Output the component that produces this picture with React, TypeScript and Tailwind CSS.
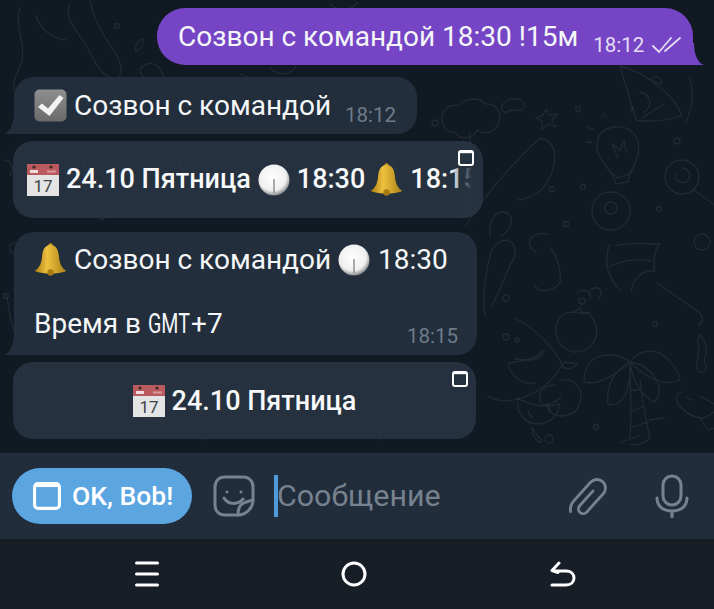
import React from 'react';

const CalendarEmoji = () => (
  <svg width="32" height="32" viewBox="0 0 32 32" className="shrink-0">
    <rect x="0" y="0" width="32" height="32" fill="#e4e4e4" />
    <rect x="0" y="0" width="32" height="11" fill="#b95a5e" />
    <circle cx="7" cy="3" r="1.6" fill="#3a2a2a" />
    <circle cx="24" cy="3" r="1.6" fill="#3a2a2a" />
    <rect x="3" y="6" width="8" height="3" fill="#efdcdc" />
    <rect x="20" y="6.5" width="9" height="2" fill="#d89a9c" />
    <text x="16" y="28" textAnchor="middle" fontSize="17" fontFamily="Roboto, sans-serif" fill="#3d4247">17</text>
  </svg>
);

const CheckEmoji = () => (
  <svg width="33" height="33" viewBox="0 0 33 33" className="shrink-0">
    <defs>
      <linearGradient id="chk" x1="0" y1="0" x2="0" y2="1">
        <stop offset="0" stopColor="#8f8f8f" />
        <stop offset="1" stopColor="#6a6a6a" />
      </linearGradient>
    </defs>
    <rect x="0.5" y="0.5" width="32" height="32" rx="5" fill="url(#chk)" />
    <path d="M4 18l4-3.500 6 5L25.500 6l4 3-14 18z" fill="#f3f3f3" />
  </svg>
);

const ClockEmoji = () => (
  <svg width="32" height="32" viewBox="0 0 32 32" className="shrink-0">
    <defs>
      <radialGradient id="clk" cx="0.45" cy="0.4" r="0.62">
        <stop offset="0" stopColor="#ffffff" />
        <stop offset="0.72" stopColor="#efefef" />
        <stop offset="1" stopColor="#7d7d7d" />
      </radialGradient>
    </defs>
    <circle cx="16" cy="16" r="15.500" fill="url(#clk)" />
    <rect x="15.300" y="15" width="1.400" height="14" fill="#8a8a8a" />
  </svg>
);

const BellEmoji = () => (
  <svg width="33" height="33" viewBox="0 0 33 33" className="shrink-0">
    <defs>
      <linearGradient id="bel" x1="0" y1="0" x2="1" y2="0">
        <stop offset="0" stopColor="#a87c10" />
        <stop offset="0.4" stopColor="#eec040" />
        <stop offset="1" stopColor="#a97e12" />
      </linearGradient>
    </defs>
    <circle cx="16.500" cy="2.500" r="2.200" fill="#c7991f" />
    <path d="M16.500 2C10 2 8.500 8 8 14c-.5 6-2.500 11-7.500 14 5 2 10.500 2.500 16 2.500S28 30 32.500 28c-5-3-7-8-7.500-14C24.500 8 23 2 16.500 2z" fill="url(#bel)" />
    <circle cx="16.500" cy="29.500" r="3.200" fill="#a87a10" />
  </svg>
);

// telegram web-app glyph, used on the inline buttons
const WebAppIcon = ({ size = 16, stroke = 2 }: { size?: number; stroke?: number }) => (
  <svg width={size} height={size} viewBox="0 0 16 16" fill="none" className="shrink-0">
    <rect x={stroke / 2} y={stroke / 2} width={16 - stroke} height={16 - stroke} rx="2" stroke="#fff" strokeWidth={stroke} />
    <rect x={stroke / 2} y={stroke / 2} width={16 - stroke} height={stroke * 1.1} fill="#fff" />
  </svg>
);

const Doodles = () => (
  <svg className="absolute inset-0" width="714" height="453" viewBox="0 0 714 453" fill="none" stroke="#ffffff" strokeOpacity="0.07" strokeWidth="1.300" strokeLinecap="round" strokeLinejoin="round">
    {/* top left */}
    <path d="M20 8c-6 18 6 36 2 52-3 12-10 18-8 30M36 16c4 12 14 22 30 24M70 4c-6 12 4 24 14 38 10 16 14 32 28 36 10 2 12-10 4-24-10-16-22-30-26-54" />
    <circle cx="117" cy="26" r="2.500" />
    <path d="M140 40c-6 6-6 16 0 8 4-4 4-12 0-8zM140 70c8-14 26-4 24 14-6 4-22-2-24-14z" />
    {/* top middle */}
    <path d="M270 68c8 8 20 8 26-2M330 4c8 8 20 8 28-2M240 74l10 4-6 8M90 150c-8 4-10 18 0 22M190 150c-8 0-14 10-8 18" />
    {/* pizza */}
    <path d="M620 66c30 8 56 32 62 50-14 4-32 6-46 4zM640 92c10 2 14 14 4 20M664 104l-22 14M690 78c4 18 2 30-4 44M651 80c4-6 12-2 10 4z" />
    {/* cloud, star */}
    <path d="M445 128c-8-10 0-26 14-22 6-10 22-8 26-2 14-2 18 14 12 22-4 8-14 8-20 4-4 10-18 10-22 2-4 0-8 0-10-4zM470 132v12M502 110c-2-8 10-14 18-10 8 4 4 12-4 10-6-2-10 6-14 0z" />
    <path d="M546 109l3 6 8-1-5 6 4 7-8-3-6 5 0-8-6-3 7-3z" />
    <circle cx="435" cy="123" r="3" />
    <circle cx="578" cy="109" r="2.500" />
    {/* lightbulb */}
    <path d="M610 172c-8-12-16-20-12-34 4-12 26-16 36-4 10 12 2 28-4 40l-12 4zM612 174l4 10 12-2 2-10M618 158l-6-14 8 6 4-10 2 12" />
    <path d="M594 130l-6-3M592 142h-6M606 118l-3-5M630 112l3-5" />
    <circle cx="677" cy="141" r="3" />
    {/* lollipop */}
    <circle cx="682" cy="177" r="17" />
    <path d="M682 168c8 0 10 10 4 14-6 2-12-2-10-8M694 190l22 16" />
    {/* rod */}
    <path d="M466 226c16-28 40-56 74-88 14 2 18 16 12 34-6 18-20 26-34 28M490 236c-2-14 6-26 14-24 12 2 8 20-4 24" />
    <circle cx="552" cy="189" r="2.500" />
    <circle cx="583" cy="187" r="2.500" />
    <circle cx="659" cy="209" r="2.500" />
    <circle cx="566" cy="224" r="2.500" />
    {/* 8 ball */}
    <circle cx="611" cy="211" r="19" />
    <circle cx="611" cy="208" r="6" />
    {/* umbrella */}
    <path d="M609 245c-4 16-4 30 12 46M609 267c14-8 30-8 42-6M659 243c-6 12-6 20-4 28-16-2-22 12-24 20M657 283l40 28c8 6 6 10 2 14M614 246c14-4 30-2 46-2" />
    <circle cx="702" cy="242" r="8" />
    {/* dino and dolphin */}
    <path d="M486 316c-6-14 2-56 6-66 6-10 18-14 22-4 4 10-2 14-6 24-6 14-10 24-16 36M514 318c20 8 44 34 48 48 6 6 14 0 16-2l-14-2c-16 30-54 48-76 34" />
    <circle cx="506" cy="298" r="3" />
    <circle cx="506" cy="337" r="3" />
    <circle cx="517" cy="340" r="2" />
    <path d="M515 359c12 2 28 2 28-8-10 10-26 10-34 12-2 8 10 22 26 20" />
    <path d="M534 285c6 8 16 8 26-2 2-16-6-30-10-36M536 252c-14-8-4-22 12-18M578 292c8-4 14 0 12 8M590 290c10-6 14 2 8 10" />
    <circle cx="582" cy="301" r="3" />
    {/* tomato */}
    <path d="M578 313c-14-4-24 6-22 20 2 14 14 22 26 18 14-4 18-20 12-30-4-8-10-10-16-8zM574 312l6-4 2 6 8-2" />
    <circle cx="655" cy="324" r="2.500" />
    <path d="M700 335c-6 6 2 12-2 16 2 8-4 12 0 20 8 4 10-4 6-10 4-10 2-20-4-26z" />
    {/* palm */}
    <path d="M630 362c-10-8-26-10-38-2-6 6-8 14-8 22 14 4 30-6 46-20zM630 362c8-12 24-14 34-6 10 8 16 18 16 24-16 8-36-4-50-18zM630 362c-18 10-24 26-22 42 14 4 24-14 22-42zM630 362c2 18 12 34 24 40 12-10 2-36-24-40zM630 362c0 30 2 54 0 76M640 380c2 24 8 48 10 58 -6 6-14 8-20 6M630 390h10M630 412l14-6M630 428l18-6M620 443l20-8M650 420l14-2" />
    {/* orange */}
    <path d="M518 398c-2 14 6 26 20 26 12 0 20-8 22-20-14 4-30 2-42-6zM555 385c-14 0-18 10-14 18 6 4 14 0 20-6M560 380c14-2 24 8 20 22-2 10-10 14-20 14-6 0-10-4-12-8" />
    <path d="M532 418c-2-4-4-4-4-8M550 412l-2-8" />
    <circle cx="596" cy="427" r="2.500" />
    <path d="M532 428c4 6 8 10 10 14-4 2-10-6-10-14z" />
    <circle cx="549" cy="439" r="4" />
    {/* fish */}
    <path d="M682 392c-10 4-6 12 2 18 6 6 14 8 20 8l10-6M687 398l6 2M700 418l8 12 6-2M700 396l14 8" />
    {/* under bubbles */}
    <path d="M60 150c10-2 24 4 24 14M90 198c20-6 28 18 10 22M120 170c20-14 60-10 70 6M220 150c20 10 40 20 40 46M300 150c20-6 40 10 30 30M376 150c20 10 30 30 10 50M420 150c20 10 30 20 20 50" />
    <path d="M14 378l36-6 4 18-18 30zM80 380c8 12 4 24 0 32M150 380c20-10 40 10 30 26-14 12-30 4-30-10M190 410c10-10 30 20 14 30M250 394c-6 14 10 30 30 20M300 370c-8 14 12 36 26 46M380 440c0-40 60-50 76-20M230 370c-10 14-4 36 8 40" />
    <path d="M10 245c8-6 18 0 10 8-4 4-12 0-10-8zM6 295c4 10 2 30 14 46" />
    <circle cx="6" cy="296" r="2.500" />
    <path d="M140 420c10-4 20 0 30 10M30 190l10 8-6 8-10-2zM4 160c8 0 10 10 6 16" />
  </svg>
);

const MessageBubbleTail = ({ side, color }: { side: 'left' | 'right'; color: string }) => (
  <svg
    width="14"
    height="22"
    viewBox="0 0 14 22"
    className={side === 'left' ? 'absolute bottom-0 -left-[9px]' : 'absolute bottom-0 -right-[11px]'}
  >
    {side === 'left' ? (
      <path d="M14 0v22H0c6-4 9-12 9-22z" fill={color} />
    ) : (
      <path d="M0 0v22h14c-6-2-10-10-10-22z" fill={color} />
    )}
  </svg>
);

const rowText = "font-['Roboto',sans-serif] text-[28px] leading-[33px] text-[#f4f6f8] whitespace-nowrap";
const boldText = "font-['Roboto',sans-serif] text-[27px] leading-[33px] font-medium text-[#f6f8fa] whitespace-nowrap";

export default function App() {
  return (
    <div className="w-[714px] h-[609px] overflow-hidden flex flex-col font-['Roboto',sans-serif]">
      {/* chat */}
      <div className="relative h-[453px] bg-[#111a23] overflow-hidden flex flex-col items-start">
        <Doodles />

        <div className="relative self-end mr-[21px] mt-[8px] w-[536px] h-[57px] bg-[#7545c6] rounded-tl-[28px] rounded-bl-[28px] rounded-tr-[28px] flex items-center pl-[21px]">
          <span className={rowText}>Созвон с командой 18:30 !15м</span>
          <span className="ml-[15px] mt-[17px] text-[20.500px] leading-[24px] text-[#e4dcf3]">18:12</span>
          <svg width="30" height="18" viewBox="0 0 30 18" fill="none" stroke="#e4dcf3" strokeWidth="1.800" strokeLinecap="round" className="ml-[8px] mt-[16px]">
            <path d="M1 10l6 6L19 2M13 15L28 2" />
          </svg>
          <MessageBubbleTail side="right" color="#7545c6" />
        </div>

        <div className="relative ml-[14px] mt-[12px] w-[403px] h-[57px] bg-[#222e3c] rounded-tl-[20px] rounded-tr-[20px] rounded-br-[20px] flex items-center pl-[20px]">
          <CheckEmoji />
          <span className={`${rowText} ml-[7px]`}>Созвон с командой</span>
          <span className="ml-[14px] mt-[19px] text-[20.500px] leading-[24px] text-[#6e7b89]">18:12</span>
          <MessageBubbleTail side="left" color="#222e3c" />
        </div>

        <div className="relative ml-[13px] mt-[7px] w-[470px] h-[77px] bg-[#2a3745]/80 rounded-[20px] overflow-hidden flex items-center pl-[14px] pr-[12px]">
          <div className="flex items-center gap-[7px] overflow-hidden w-[445px]">
            <CalendarEmoji />
            <span className={boldText}>24.10 Пятница</span>
            <ClockEmoji />
            <span className={boldText}>18:30</span>
            <span className="-ml-[2px]"><BellEmoji /></span>
            <span className={boldText}>18:15</span>
          </div>
          <div className="absolute top-0 bottom-0 left-[438px] w-[21px] bg-gradient-to-r from-[#263340]/0 to-[#263340]" />
          <div className="absolute top-[9px] right-[9px]">
            <WebAppIcon />
          </div>
        </div>

        <div className="relative ml-[14px] mt-[14px] w-[463px] h-[123px] bg-[#222e3c] rounded-tl-[20px] rounded-tr-[20px] rounded-br-[20px] pl-[20px] pt-[11px]">
          <div className="flex items-center h-[33px]">
            <BellEmoji />
            <span className={`${rowText} ml-[7px]`}>Созвон с командой</span>
            <span className="ml-[7px]"><ClockEmoji /></span>
            <span className={`${rowText} ml-[8px]`}>18:30</span>
          </div>
          <div className={`${rowText} mt-[31px]`}>
            Время в <span className="inline-block w-[43px] origin-left scale-x-[0.7]">GMT</span>+7
          </div>
          <span className="absolute right-[19px] bottom-[7px] text-[20.500px] leading-[24px] text-[#6e7b89]">18:15</span>
          <MessageBubbleTail side="left" color="#222e3c" />
        </div>

        <div className="relative ml-[13px] mt-[7px] w-[463px] h-[77px] bg-[#2a3745]/80 rounded-[20px] flex items-center justify-center gap-[7px] pt-[1px]">
          <CalendarEmoji />
          <span className={boldText}>24.10 Пятница</span>
          <div className="absolute top-[9px] right-[8px]">
            <WebAppIcon />
          </div>
        </div>
      </div>

      {/* input bar */}
      <div className="h-[86px] bg-[#222d3b] flex items-center pl-[12px]">
        <button className="w-[180px] h-[56px] rounded-full bg-[#5ba5e1] flex items-center pl-[21px] gap-[11px]">
          <WebAppIcon size={28} stroke={1.800} />
          <span className="text-[26.500px] font-medium text-white whitespace-nowrap">OK, Bob!</span>
        </button>
        <svg width="42" height="42" viewBox="0 0 42 42" fill="none" stroke="#76828f" strokeWidth="3" strokeLinecap="round" strokeLinejoin="round" className="ml-[21px] shrink-0">
          <path d="M12 2h18c6 0 10 4 10 10v13c0 8-7 15-15 15H12C6 40 2 36 2 30V12C2 6 6 2 12 2z" />
          <path d="M25 40c0-6 1-9 4-11 3-2 7-3 11-4M11 23c4 7 14 7 19 1" />
          <circle cx="14" cy="17" r="1.500" fill="#76828f" stroke="none" />
          <circle cx="28" cy="17" r="1.500" fill="#76828f" stroke="none" />
        </svg>
        <div className="ml-[19px] w-[4px] h-[42px] bg-[#4f9bd9] shrink-0" />
        <span className="text-[30.400px] text-[#76828f] -ml-[1px] whitespace-nowrap">Сообщение</span>
        <svg width="38" height="42" viewBox="0 0 40 42" fill="none" stroke="#76828f" strokeWidth="3" strokeLinecap="round" strokeLinejoin="round" className="ml-[128px] shrink-0">
          <g transform="translate(20 23) rotate(42)">
            <path d="M-1 -8V13a5 5 0 0 0 10 0V-13a9 9 0 0 0 -18 0V14a14 13 0 0 0 5 10" transform="translate(0 -1)" />
          </g>
        </svg>
        <svg width="34" height="44" viewBox="0 0 34 44" fill="none" stroke="#76828f" strokeWidth="3" strokeLinecap="round" className="ml-[48px] shrink-0">
          <rect x="8" y="2" width="18" height="29" rx="9" />
          <path d="M2 24c0 9 7 13 15 13s15-4 15-13M17 37v6" />
        </svg>
      </div>

      {/* android nav */}
      <div className="flex-1 bg-[#171e26] relative flex items-center">
        <svg width="24" height="26" viewBox="0 0 24 26" fill="none" stroke="#fff" strokeWidth="3" strokeLinecap="round" className="ml-[135px]">
          <path d="M1.500 2h21M1.500 13h21M1.500 24h21" />
        </svg>
        <svg width="26" height="26" viewBox="0 0 26 26" fill="none" stroke="#fff" strokeWidth="3" className="ml-[182px]">
          <circle cx="13" cy="13" r="11" />
        </svg>
        <svg width="26" height="26" viewBox="0 0 26 26" fill="none" stroke="#fff" strokeWidth="3" strokeLinecap="round" strokeLinejoin="round" className="ml-[183px]">
          <path d="M2 24h14c5 0 8-3 8-7s-3-7-8-7H3M9 2L2 9.500l6 2" />
        </svg>
      </div>
    </div>
  );
}
